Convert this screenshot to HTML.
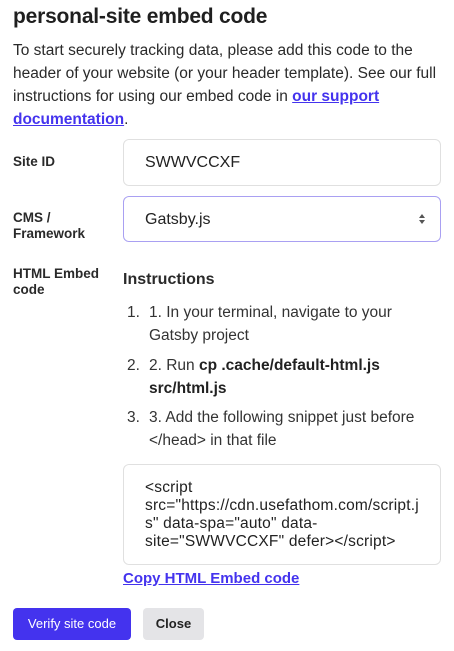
<!DOCTYPE html>
<html><head><meta charset="utf-8"><style>
*{box-sizing:border-box;margin:0;padding:0}
body{width:454px;height:651px;background:#fff;font-family:"Liberation Sans",Arial,sans-serif;color:#222;position:relative;overflow:hidden}
.a{position:absolute}
h1{position:absolute;left:13px;top:5px;font-size:21px;font-weight:bold;color:#1f1f1f;letter-spacing:-0.2px}
p.intro{position:absolute;left:13px;top:39px;width:430px;font-size:15.5px;line-height:23px;color:#2a2a2a}
a{color:#4433ee;font-weight:bold;text-decoration:underline}
.lbl{font-size:13.5px;font-weight:bold;color:#2a2a2a;line-height:16px;left:13px}
.box{left:123px;width:318px;border:1px solid #e0e0e0;border-radius:6px;background:#fff}
.li{font-size:15.5px;line-height:23px;color:#333;left:127px;width:310px}
.li .t{position:absolute;left:22px;top:0;width:290px}
.code{font-size:15.5px;line-height:18px;color:#222;left:145px;white-space:nowrap;letter-spacing:0.2px}
.btn{top:608px;height:32px;border-radius:4px;font-size:13px;text-align:center;line-height:32px}
</style></head><body>
<h1>personal-site embed code</h1>
<p class="intro">To start securely tracking data, please add this code to the header of your website (or your header template). See our full instructions for using our embed code in <a>our support documentation</a>.</p>
<div class="a lbl" style="top:154px">Site ID</div>
<div class="a box" style="top:139px;height:47px"></div>
<div class="a" style="left:145px;top:154px;font-size:16px">SWWVCCXF</div>
<div class="a lbl" style="top:210px">CMS /<br>Framework</div>
<div class="a box" style="top:196px;height:46px;border-color:#a9a0f2"></div>
<div class="a" style="left:145px;top:211px;font-size:16px">Gatsby.js</div>
<svg class="a" style="left:418px;top:213px" width="8" height="12" viewBox="0 0 8 12"><path d="M4 1L7 5H1z M4 11L7 7H1z" fill="#555"/></svg>
<div class="a lbl" style="top:266px">HTML Embed<br>code</div>
<div class="a" style="left:123px;top:271px;font-size:16px;font-weight:bold;color:#2a2a2a">Instructions</div>
<div class="a li" style="top:301px">1.<div class="t">1. In your terminal, navigate to your Gatsby project</div></div>
<div class="a li" style="top:354px">2.<div class="t">2. Run <b style="color:#222">cp .cache/default-html.js src/html.js</b></div></div>
<div class="a li" style="top:406px">3.<div class="t">3. Add the following snippet just before &lt;/head&gt; in that file</div></div>
<div class="a box" style="top:464px;height:101px"></div>
<div class="a code" style="top:479px">&lt;script<br>src="https://cdn.usefathom.com/script.j<br>s" data-spa="auto" data-<br>site="SWWVCCXF" defer&gt;&lt;/script&gt;</div>
<div class="a" style="left:123px;top:570px;font-size:15px"><a>Copy HTML Embed code</a></div>
<div class="a btn" style="left:13px;width:118px;background:#4433ee;color:#fff">Verify site code</div>
<div class="a btn" style="left:143px;width:61px;background:#e4e4e7;color:#222;font-weight:bold">Close</div>
</body></html>
